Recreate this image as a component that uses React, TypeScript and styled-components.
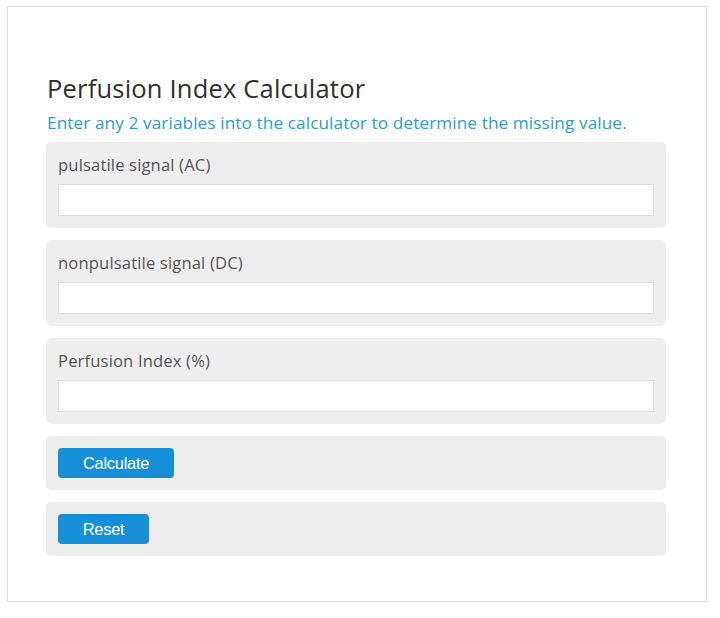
import React from 'react';
import { styled, createGlobalStyle } from 'styled-components';

const GlobalStyle = createGlobalStyle`
	html, body {
		margin: 0;
		padding: 0;
		background: #fff;
	}
	body {
		font-family: 'Open Sans', 'Liberation Sans', sans-serif;
	}
`;

const fields = ['pulsatile signal (AC)', 'nonpulsatile signal (DC)', 'Perfusion Index (%)'];

const App = () => {
	return (
		<Page>
			<GlobalStyle />
			<Card>
				<Title>Perfusion Index Calculator</Title>
				<Intro>Enter any 2 variables into the calculator to determine the missing value.</Intro>
				<Rows>
					{fields.map((label) => (
						<FieldPanel key={label}>
							<Label>{label}</Label>
							<Input type="text" />
						</FieldPanel>
					))}
					<ButtonPanel>
						<ActionButton type="button" $width={116}>
							Calculate
						</ActionButton>
					</ButtonPanel>
					<ButtonPanel>
						<ActionButton type="button" $width={91}>
							Reset
						</ActionButton>
					</ButtonPanel>
				</Rows>
			</Card>
		</Page>
	);
};

export default App;

const Page = styled.div`
	padding: 6px 0 0 7px;
`;

const Card = styled.div`
	box-sizing: border-box;
	width: 700px;
	height: 596px;
	border: 1px solid #dcdcdc;
	padding: 64px 39px 0 38px;
`;

const Title = styled.h1`
	margin: 0;
	font-family: 'Open Sans', 'Liberation Sans', sans-serif;
	font-weight: 500;
	font-size: 25.5px;
	line-height: 34px;
	color: #2f2f2f;
	padding-left: 1px;
	letter-spacing: 0.2px;
`;

const Intro = styled.p`
	margin: 7px 0 8px 1px;
	font-size: 17.2px;
	line-height: 22px;
	color: #2e9ad6;
	letter-spacing: 0.1px;
`;

const Rows = styled.div`
	display: flex;
	flex-direction: column;
	gap: 12px;
	width: 620px;
`;

const FieldPanel = styled.div`
	display: flex;
	flex-direction: column;
	background: #eeeeee;
	border-radius: 5px;
	padding: 12px 12px 10px 12px;
	height: 86px;
	box-sizing: border-box;
`;

const Label = styled.label`
	font-size: 16.6px;
	line-height: 22px;
	color: #555;
	margin-bottom: 8px;
	letter-spacing: 0.15px;
`;

const Input = styled.input`
	box-sizing: border-box;
	height: 32px;
	width: 100%;
	border: 1px solid #dedede;
	background: #fff;
	outline: none;
	padding: 0 8px;
`;

const ButtonPanel = styled.div`
	display: flex;
	align-items: center;
	background: #eeeeee;
	border-radius: 5px;
	padding: 0 12px;
	height: 54px;
	box-sizing: border-box;
`;

const ActionButton = styled.button<{ $width: number }>`
	width: ${({ $width }) => $width}px;
	height: 30px;
	border: none;
	border-radius: 4px;
	background: #1590d8;
	color: #fff;
	font-family: 'Liberation Sans', Arial, sans-serif;
	font-size: 16.5px;
	letter-spacing: -0.3px;
	cursor: pointer;
`;
